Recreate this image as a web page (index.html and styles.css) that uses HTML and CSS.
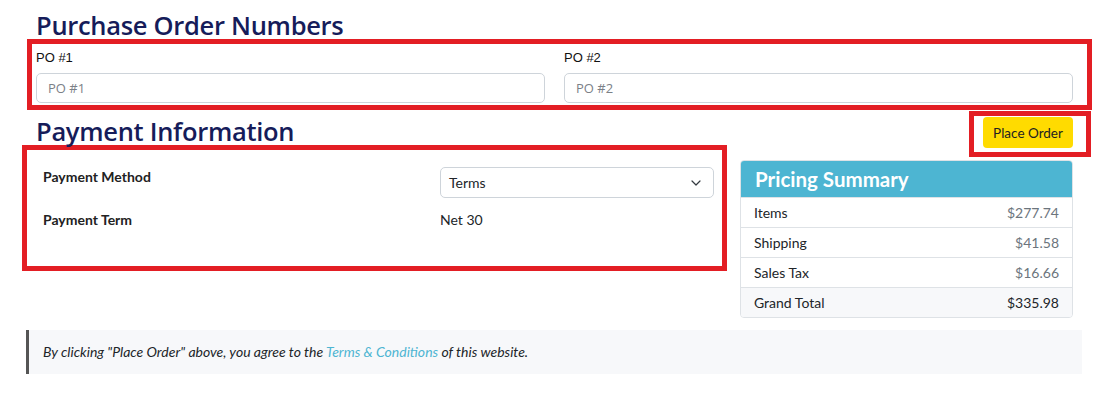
FILE: index.html
```html
<!DOCTYPE html>
<html lang="en">
<head>
  <meta charset="UTF-8" />
  <title>Checkout - Payment</title>
  <link rel="stylesheet" href="styles.css">
</head>
<body>
  <div class="page">

    <h2 class="section-title">Purchase Order Numbers</h2>
    <div class="po-box">
      <div class="po-field">
        <label for="po1">PO #1</label>
        <input type="text" id="po1" placeholder="PO #1" />
      </div>
      <div class="po-field">
        <label for="po2">PO #2</label>
        <input type="text" id="po2" placeholder="PO #2" />
      </div>
    </div>

    <div class="payment-row">
      <div class="payment-col">
        <h2 class="section-title payment-title">Payment Information</h2>
        <div class="payment-box">
          <div class="payment-line">
            <div class="payment-label">Payment Method</div>
            <div class="payment-value">
              <div class="select">
                <span>Terms</span>
                <svg width="10" height="6" viewBox="0 0 10 6" aria-hidden="true">
                  <path d="M1 1l4 4 4-4" fill="none" stroke="#343a40" stroke-width="1.2" stroke-linecap="round" stroke-linejoin="round"/>
                </svg>
              </div>
            </div>
          </div>
          <div class="payment-line term-line">
            <div class="payment-label">Payment Term</div>
            <div class="payment-value">Net 30</div>
          </div>
        </div>
      </div>

      <div class="summary-col">
        <div class="order-box">
          <button class="place-order">Place Order</button>
        </div>
        <div class="summary-card">
          <div class="summary-header">Pricing Summary</div>
          <div class="summary-row"><span>Items</span><span class="amount">$277.74</span></div>
          <div class="summary-row"><span>Shipping</span><span class="amount">$41.58</span></div>
          <div class="summary-row"><span>Sales Tax</span><span class="amount">$16.66</span></div>
          <div class="summary-row total"><span>Grand Total</span><span class="amount">$335.98</span></div>
        </div>
      </div>
    </div>

    <div class="notice">
      By clicking "Place Order" above, you agree to the <a href="#">Terms &amp; Conditions</a> of this website.
    </div>

  </div>
</body>
</html>
```

FILE: styles.css
```css
:root {
  --navy: #161c5a;
  --mark: #e31e24;
  --text: #212529;
  --muted: #6c757d;
  --line: #dee2e6;
  --field: #ced4da;
  --info: #4db5d2;
  --light: #f7f8fa;
  --yellow: #ffdb00;
}

body {
  margin: 0;
  font-family: Lato, "Noto Sans", sans-serif;
  font-size: 14px;
  color: var(--text);
  background: #fff;
}

.page {
  width: 1037px;
  padding-left: 36px;
}

.section-title {
  margin: 0;
  padding-top: 11px;
  font-family: "Open Sans", sans-serif;
  font-size: 25.5px;
  font-weight: 600;
  line-height: 28px;
  color: var(--navy);
  letter-spacing: -0.3px;
}

/* Purchase order numbers */
.po-box {
  display: flex;
  gap: 19px;
  margin: 0 -19px 0 -9px;
  padding: 5px 14px 2px 4px;
  border: 5px solid var(--mark);
}

.po-field {
  flex: 1;
  display: flex;
  flex-direction: column;
}

.po-field label {
  line-height: 18px;
  font-family: "Liberation Sans", Arial, sans-serif;
  font-size: 13px;
  color: #111;
}

.po-field input {
  margin-top: 6px;
  height: 30px;
  box-sizing: border-box;
  padding: 0 11px;
  border: 1px solid var(--field);
  border-radius: 5px;
  font-family: "Open Sans", sans-serif;
  font-size: 13px;
  color: var(--text);
}
.po-field input::placeholder {
  color: #7b8087;
}

/* Payment row */
.payment-row {
  display: flex;
  align-items: flex-start;
  gap: 13px;
}

.payment-col {
  width: 691px;
}

.payment-title {
  padding-top: 7px;
}

.payment-box {
  margin-left: -14px;
  padding: 17px 8px 36px 16px;
  border: 5px solid var(--mark);
}

.payment-line {
  display: flex;
  align-items: flex-start;
}
.term-line {
  margin-top: 12px;
}

.payment-label {
  width: 397px;
  line-height: 20px;
  font-weight: 700;
  color: #222;
}

.payment-value {
  flex: 1;
  line-height: 20px;
}

.select {
  height: 31px;
  box-sizing: border-box;
  display: flex;
  align-items: center;
  justify-content: space-between;
  padding: 0 12px 0 8px;
  border: 1px solid var(--field);
  border-radius: 5px;
}

/* Summary column */
.summary-col {
  width: 333px;
}

.order-box {
  display: flex;
  justify-content: flex-end;
  margin: 1px -18px 0 229px;
  padding: 1px 13px 4px 9px;
  border: 5px solid var(--mark);
}

.place-order {
  width: 90px;
  height: 31px;
  padding: 0;
  border: none;
  border-radius: 4px;
  background: var(--yellow);
  color: #222;
  font-family: inherit;
  font-size: 13.5px;
  cursor: pointer;
}

.summary-card {
  margin-top: 3px;
  border: 1px solid var(--line);
  border-radius: 4px;
  overflow: hidden;
}

.summary-header {
  height: 36px;
  line-height: 37px;
  padding: 0 14px;
  background: var(--info);
  color: #fff;
  font-size: 20.5px;
  font-weight: 700;
}

.summary-row {
  display: flex;
  justify-content: space-between;
  height: 29px;
  line-height: 29px;
  padding: 0 13px;
  border-top: 1px solid var(--line);
}
.summary-row .amount {
  color: var(--muted);
}
.summary-row.total {
  background: var(--light);
}
.summary-row.total .amount {
  color: var(--text);
}

/* Terms notice */
.notice {
  margin: 12px 0 0 -10px;
  width: 1039px;
  height: 44px;
  line-height: 44px;
  padding-left: 14px;
  border-left: 3px solid #555;
  background: var(--light);
  font-style: italic;
}
.notice a {
  color: var(--info);
  text-decoration: none;
}
```
